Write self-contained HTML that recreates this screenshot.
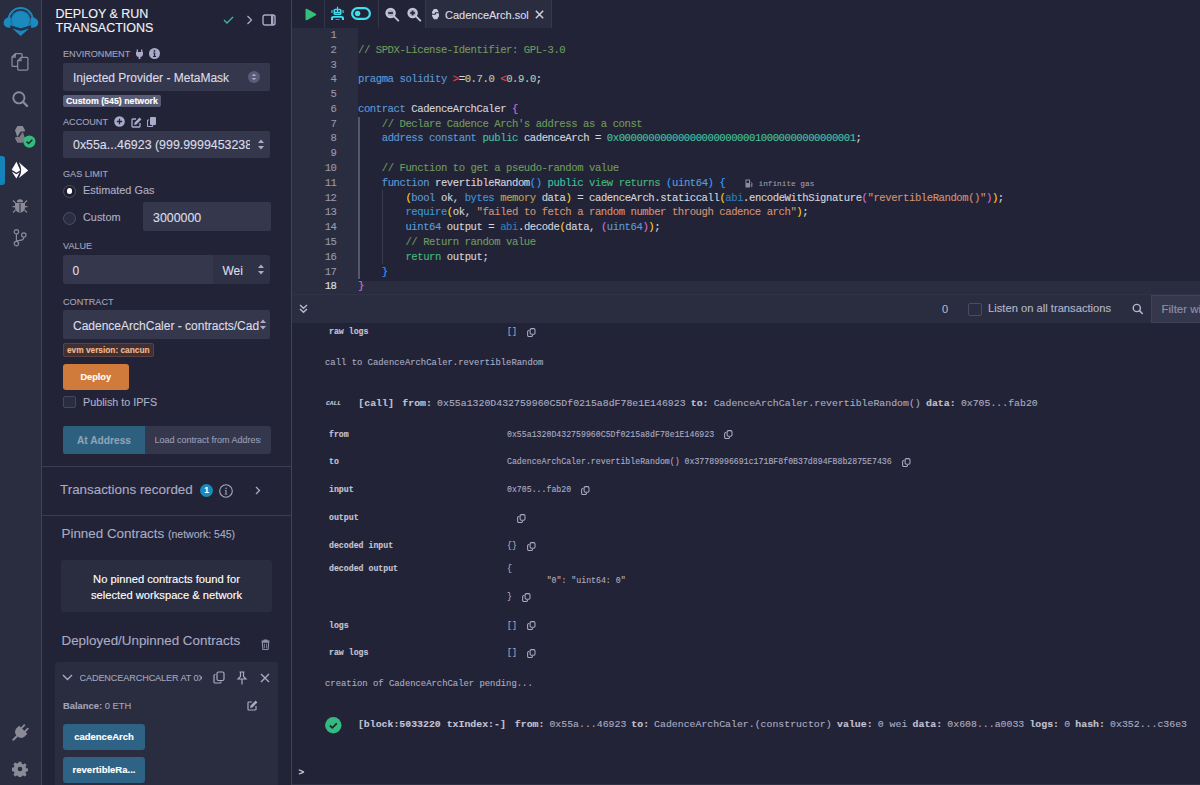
<!DOCTYPE html>
<html><head><meta charset="utf-8">
<style>
*{box-sizing:border-box;margin:0;padding:0}
html,body{width:1200px;height:785px;overflow:hidden;background:#222336;font-family:"Liberation Sans",sans-serif;color:#babbcc}
.a{position:absolute;white-space:nowrap}
#icons{position:absolute;left:0;top:0;width:42px;height:785px;background:#2a2c3f;border-right:1px solid #3f4155}
#side{position:absolute;left:42px;top:0;width:250px;height:785px;background:#222336;border-right:1px solid #3f4155}
#main{position:absolute;left:292px;top:0;width:908px;height:785px;background:#222336;overflow:hidden}
.lbl{font-size:9.1px;color:#a2a3bd}
.sel{position:absolute;background:#35384c;border-radius:2px}
.txt12{font-size:12px;color:#dcdce8}
.mono{font-family:"Liberation Mono",monospace}

#code .cm{color:#6f9a5c}
#code .kw{color:#5b9bd8}
#code .kw2{color:#3f95d8}
#code .tl{color:#43c1a0}
#code .gr{color:#45b87a}
#code .rd{color:#e8453c}
#code .nm{color:#b5cea8}
#code .b1{color:#ffd60a}
#code .b2{color:#d670d6}
#code .b3{color:#2f9fff}
#code .ol{color:#c0a24a}
#code .st{color:#d09274}
#code .ab{color:#2f7fbf}

#side .a, #main .a{-webkit-text-stroke:0.12px currentColor}
</style></head><body>
<div id="icons">
  <svg class="a" style="left:0;top:0" width="42" height="42" viewBox="0 0 42 42">
    <path d="M8.5 21.5 A12.2 12.2 0 0 1 32.9 21.5" transform="translate(0 -1.2)" fill="none" stroke="#1b8abf" stroke-width="2"/>
    <path d="M10.9 17.6 C6 17.4 3.7 19.5 3.7 22.7 C3.7 26 6 27.9 10.9 27.8z" fill="#1b8abf"/>
    <path d="M30.5 17.6 C35.5 17.4 38.2 19.5 38.2 22.7 C38.2 26 35.5 27.9 30.5 27.8z" fill="#1b8abf"/>
    <path d="M10.8 20.3 A9.9 9.9 0 0 1 30.6 20.3 L30.6 25.6 L20.7 28.6 L10.8 25.6z" fill="#1b8abf"/>
    <circle cx="20.7" cy="20.3" r="9.2" fill="none" stroke="#1c4a6c" stroke-width="0.9" stroke-dasharray="1 1.2"/>
    <path d="M10.3 25.4 L20.7 28.6 L31.1 25.4 L31.1 28.2 L20.7 31.2 L10.3 28.2z" fill="#1c3550"/>
    <path d="M12.3 28.6 L20.7 31.1 L29.1 28.6 L20.7 35.9z" fill="#1b8abf"/>
  </svg>
  <svg class="a" style="left:11px;top:53px" width="18" height="18" viewBox="0 0 18 18" fill="none" stroke="#8b8b98" stroke-width="1.25" stroke-linejoin="round">
    <path d="M4.3 0.7H10.1Q11.1 0.7 11.1 1.7V12.4Q11.1 13.4 10.1 13.4H2Q1 13.4 1 12.4V4z M4.3 0.7V4H1"/>
    <path d="M10 4.4H15.9Q16.9 4.4 16.9 5.4V16Q16.9 17 15.9 17H7.7Q6.7 17 6.7 16V7.7z" fill="#2a2c3f"/>
    <path d="M10 4.4V7.7H6.7"/>
  </svg>
  <svg class="a" style="left:11px;top:89px" width="18" height="18" viewBox="0 0 18 18" fill="none" stroke="#8b8b98">
    <circle cx="7.9" cy="8.8" r="5.6" stroke-width="1.9"/><path d="M11.9 12.8L16 16.9" stroke-width="2.2" stroke-linecap="round"/>
  </svg>
  <svg class="a" style="left:14.9px;top:125.7px" width="11" height="17" viewBox="0 0 11 17">
    <path d="M2.4 0H7.7L10.1 4.3L9.6 5.6H5.8L2.3 10.9L0 4.3z" fill="#8a8a94"/>
    <path d="M7.7 16.7H2.4L0 12.4L0.5 11.1H4.3L7.8 5.8L10.1 12.4z" fill="#7c7c86"/>
  </svg>
  <svg class="a" style="left:23.3px;top:135.3px" width="13" height="13" viewBox="0 0 13 13"><circle cx="6.4" cy="6.6" r="6.1" fill="#33bb7f"/><path d="M3.6 6.6L5.6 8.5L9.3 4.8" fill="none" stroke="#1c2a2a" stroke-width="1.5"/></svg>
  <div class="a" style="left:0;top:155.5px;width:5px;height:29px;background:#1583b8;border-radius:0 3px 3px 0"></div>
  <svg class="a" style="left:11px;top:161px" width="18" height="18" viewBox="0 0 18 18" fill="#fff">
    <path d="M5.4 0.7L0.75 8.75L5.4 11.7L9.3 9.3z"/>
    <path d="M0.75 10.4L5.4 13.3L8.7 11.3L5.4 17.5z"/>
    <path d="M7.9 1.2L17.2 9.5L7.9 17Q12.6 9.4 7.9 1.2z"/>
  </svg>
  <svg class="a" style="left:12px;top:198px" width="16" height="16" viewBox="0 0 16 16">
    <path d="M4.8 4.2 A3.2 3 0 0 1 11.2 4.2z" fill="#8b8b98"/>
    <path d="M3 5h10v4.5c0 2.9-2.2 5-5 5s-5-2.1-5-5z" fill="#8b8b98"/>
    <path d="M8 5.5v8.5" stroke="#2a2c3f" stroke-width="1.1"/>
    <path d="M1 2.5L3.5 5 M15 2.5L12.5 5 M0.5 8.6h2.5 M15.5 8.6H13 M1 14.5L3.5 12 M15 14.5L12.5 12" stroke="#8b8b98" stroke-width="1.1"/>
  </svg>
  <svg class="a" style="left:13px;top:229px" width="16" height="18" viewBox="0 0 16 18" fill="none" stroke="#8b8b98" stroke-width="1.2">
    <circle cx="3.4" cy="2.8" r="2.2"/><circle cx="3.4" cy="14.6" r="2.2"/><circle cx="10.8" cy="6" r="2.2"/>
    <path d="M3.4 5v7.4 M10.8 8.2c0 2.5-1.5 3-4 3.2c-1.8.2-3.1.6-3.4 1.2"/>
  </svg>
  <svg class="a" style="left:10px;top:722px" width="20" height="22" viewBox="-10 -11 20 22">
    <g transform="rotate(45)" fill="#8b8b98">
      <rect x="-3.4" y="-9.5" width="1.9" height="5.5" rx=".9"/><rect x="1.5" y="-9.5" width="1.9" height="5.5" rx=".9"/>
      <path d="M-5.8 -4.6H5.8V-0.8A5.8 5.2 0 0 1 -5.8 -0.8z"/>
      <rect x="-1" y="3.5" width="2" height="7" rx="1"/>
    </g>
  </svg>
  <svg class="a" style="left:12px;top:761px" width="16" height="16" viewBox="0 0 16 16">
    <path d="M6.7 0.8h2.6l.4 2 1.4.6 1.7-1.1 1.8 1.8-1.1 1.7.6 1.4 2 .4v2.6l-2 .4-.6 1.4 1.1 1.7-1.8 1.8-1.7-1.1-1.4.6-.4 2H6.7l-.4-2-1.4-.6-1.7 1.1-1.8-1.8 1.1-1.7-.6-1.4-2-.4V6.7l2-.4.6-1.4-1.1-1.7 1.8-1.8 1.7 1.1 1.4-.6z" fill="#8b8b98"/>
    <circle cx="8" cy="8" r="2.3" fill="#2a2c3f"/>
  </svg>
</div>
<div id="side">
  <div class="a" style="left:13.5px;top:7px;font-size:12.5px;line-height:14px;color:#f2f2f6">DEPLOY &amp; RUN<br>TRANSACTIONS</div>
  <svg class="a" style="left:181px;top:16px" width="11" height="8" viewBox="0 0 11 8"><path d="M1 4 L4 7 L10 1" fill="none" stroke="#3fb58f" stroke-width="1.4"/></svg>
  <svg class="a" style="left:204px;top:15px" width="7" height="10" viewBox="0 0 7 10"><path d="M1.5 1 L5.5 5 L1.5 9" fill="none" stroke="#a9abc4" stroke-width="1.3"/></svg>
  <svg class="a" style="left:220px;top:14px" width="14" height="12" viewBox="0 0 14 12"><rect x="1" y="1" width="12" height="10" rx="2" fill="none" stroke="#a9abc4" stroke-width="1.4"/><rect x="9" y="1" width="2.4" height="10" fill="#a9abc4"/></svg>

  <div class="a lbl" style="left:21px;top:49px">ENVIRONMENT</div>
  <svg class="a" style="left:94px;top:49px" width="7" height="10" viewBox="0 0 7 10"><path d="M1.3 0.5v2.5M5.7 0.5v2.5" stroke="#a9abc9" stroke-width="1.3"/><path d="M0 3h7v2.2c0 1.6-1.4 2.6-2.6 2.8v2h-1.8v-2C1.4 7.8 0 6.8 0 5.2z" fill="#a9abc9"/></svg>
  <svg class="a" style="left:107px;top:47.5px" width="11" height="11" viewBox="0 0 11 11"><circle cx="5.5" cy="5.5" r="5.5" fill="#a9abc9"/><circle cx="5.5" cy="2.9" r="0.9" fill="#222336"/><path d="M4.3 4.6h1.9v3.4h0.9v1H4v-1h0.9V5.6h-0.6z" fill="#222336"/></svg>
  <div class="sel" style="left:21px;top:63px;width:207px;height:28px"></div>
  <div class="a txt12" style="left:31px;top:70.7px">Injected Provider - MetaMask</div>
  <svg class="a" style="left:206px;top:71px" width="12" height="12" viewBox="0 0 12 12"><circle cx="6" cy="6" r="6" fill="#595c76"/><path d="M3.8 5L6 2.8L8.2 5zM3.8 7L6 9.2L8.2 7z" fill="#a9abc9"/></svg>
  <div class="a badge" style="left:21px;top:95px;width:98px;height:12px;background:#595c76;color:#fff;font-weight:bold;font-size:8.8px;line-height:12.5px;padding-left:3px;border-radius:2px">Custom (545) network</div>

  <div class="a lbl" style="left:21px;top:117px">ACCOUNT</div>
  <svg class="a" style="left:72px;top:116px" width="11" height="11" viewBox="0 0 11 11"><circle cx="5.5" cy="5.5" r="5.3" fill="#a9abc9"/><path d="M5.5 2.8v5.4M2.8 5.5h5.4" stroke="#222336" stroke-width="1.3"/></svg>
  <svg class="a" style="left:88.5px;top:116.5px" width="11" height="11" viewBox="0 0 11 11"><path d="M5 2H1.8C1.3 2 1 2.3 1 2.8v6.4c0 .5.3.8.8.8h6.4c.5 0 .8-.3.8-.8V6" fill="none" stroke="#a9abc9" stroke-width="1.3"/><path d="M8.6 0.6l1.8 1.8-5 5-2.3.5.5-2.3z" fill="#a9abc9"/></svg>
  <svg class="a" style="left:105px;top:117px" width="9" height="10" viewBox="0 0 9 10"><path d="M2 3H1.2C.7 3 .5 3.3.5 3.8v5c0 .5.3.7.7.7H5c.5 0 .7-.3.7-.7V8" fill="none" stroke="#a9abc9" stroke-width="1.1"/><rect x="3" y="0" width="6" height="8" rx="1" fill="#a9abc9"/></svg>
  <div class="sel" style="left:21px;top:131px;width:207px;height:27px"></div>
  <div class="a txt12" style="left:31px;top:138px;width:177px;overflow:hidden;font-size:12.4px">0x55a...46923 (999.999945323858</div>
  <svg class="a" style="left:214.5px;top:138px" width="8" height="13" viewBox="0 0 8 13"><path d="M1 5L4 1.5L7 5zM1 8L4 11.5L7 8z" fill="#a9abc9"/></svg>

  <div class="a lbl" style="left:21px;top:169px">GAS LIMIT</div>
  <div class="a" style="left:21px;top:184.5px;width:13px;height:13px;border-radius:50%;background:#1e1f30;border:1.4px solid #4d4f64"></div>
  <div class="a" style="left:24.6px;top:188.1px;width:5.8px;height:5.8px;border-radius:50%;background:#fff"></div>
  <div class="a" style="left:41px;top:184px;font-size:10.9px;color:#aeafc4">Estimated Gas</div>
  <div class="a" style="left:21px;top:211.5px;width:13px;height:13px;border-radius:50%;background:#2b2d41;border:1.4px solid #4d4f64"></div>
  <div class="a" style="left:41px;top:211px;font-size:10.9px;color:#aeafc4">Custom</div>
  <div class="sel" style="left:101px;top:202px;width:128px;height:29px"></div>
  <div class="a txt12" style="left:111px;top:210.5px;font-size:12.4px">3000000</div>

  <div class="a lbl" style="left:21px;top:241px">VALUE</div>
  <div class="sel" style="left:21px;top:255px;width:150px;height:29px;border-radius:3px 0 0 3px"></div>
  <div class="sel" style="left:171px;top:255px;width:57px;height:29px;background:#2f3145;border-radius:0 3px 3px 0"></div>
  <div class="a txt12" style="left:30.5px;top:263.7px">0</div>
  <div class="a txt12" style="left:180.5px;top:263.7px">Wei</div>
  <svg class="a" style="left:214.5px;top:263px" width="8" height="13" viewBox="0 0 8 13"><path d="M1 5L4 1.5L7 5zM1 8L4 11.5L7 8z" fill="#a9abc9"/></svg>

  <div class="a lbl" style="left:21px;top:297px">CONTRACT</div>
  <div class="sel" style="left:21px;top:310px;width:207px;height:29px"></div>
  <div class="a txt12" style="left:31px;top:318.7px;width:186px;overflow:hidden">CadenceArchCaler - contracts/CadenceArch.sol</div>
  <svg class="a" style="left:217px;top:318px" width="8" height="13" viewBox="0 0 8 13"><path d="M1 5L4 1.5L7 5zM1 8L4 11.5L7 8z" fill="#a9abc9"/></svg>
  <div class="a" style="left:21px;top:343px;width:91px;height:14px;background:#3f3034;border:1px solid #5a4242;color:#f3b88c;font-weight:bold;font-size:8.3px;line-height:12.5px;padding-left:3px;border-radius:2px">evm version: cancun</div>

  <div class="a" style="left:21px;top:364px;width:65.5px;height:26px;background:#d07a3b;border-radius:3px;color:#fff;font-weight:bold;font-size:9.2px;line-height:26px;text-align:center">Deploy</div>
  <div class="a" style="left:21px;top:395.5px;width:13px;height:12.5px;border:1px solid #44475e;border-radius:2px;background:#2a2c3f"></div>
  <div class="a" style="left:41px;top:395.5px;font-size:10.75px;color:#aeafc4">Publish to IPFS</div>

  <div class="a" style="left:21px;top:426px;width:82px;height:28px;background:#2d5f7f;border-radius:2px 0 0 2px;color:#8ea3b6;font-weight:bold;font-size:10.2px;line-height:29.5px;text-align:center">At Address</div>
  <div class="a" style="left:103px;top:426px;width:126px;height:28px;background:#35384c;border-radius:0 3px 3px 0;color:#9a9cb4;font-size:9px;line-height:28px;padding-left:9.5px;overflow:hidden"><div style="width:106px;overflow:hidden">Load contract from Address</div></div>
  <div class="a" style="left:0;top:466px;width:249px;height:1px;background:#3b3d52"></div>

  <div class="a" style="left:18px;top:481.5px;font-size:13.4px;color:#a9abc4">Transactions recorded</div>
  <div class="a" style="left:158px;top:484px;width:13px;height:13px;border-radius:50%;background:#1b89bd;color:#fff;font-weight:bold;font-size:8.5px;line-height:13px;text-align:center">1</div>
  <svg class="a" style="left:177px;top:483.5px" width="14" height="14" viewBox="0 0 14 14"><circle cx="7" cy="7" r="6.3" fill="none" stroke="#a9abc4" stroke-width="1.1"/><circle cx="7" cy="4.2" r="0.8" fill="#a9abc4"/><path d="M5.8 6h1.7v3.8h0.8v0.8H5.7v-.8h.8V6.8h-.7z" fill="#a9abc4"/></svg>
  <svg class="a" style="left:213px;top:486px" width="6" height="9" viewBox="0 0 6 9"><path d="M1 1L4.5 4.5L1 8" fill="none" stroke="#a9abc4" stroke-width="1.3"/></svg>
  <div class="a" style="left:0;top:515px;width:249px;height:1px;background:#3b3d52"></div>

  <div class="a" style="left:19.5px;top:525.5px;font-size:13.4px;color:#a9abc4">Pinned Contracts <span style="font-size:10.5px">(network: 545)</span></div>
  <div class="a" style="left:19px;top:560px;width:211px;height:52px;background:#2a2c3f;border-radius:3px"></div>
  <div class="a" style="left:19px;top:572px;width:211px;text-align:center;font-size:11.2px;line-height:15.5px;color:#fff;white-space:normal">No pinned contracts found for<br>selected workspace &amp; network</div>

  <div class="a" style="left:19.5px;top:632.5px;font-size:13.4px;color:#a9abc4">Deployed/Unpinned Contracts</div>
  <svg class="a" style="left:218.5px;top:638.5px" width="9" height="11" viewBox="0 0 9 11"><path d="M2.8 0.6h3.4l.5 1H8.4v1.3H.6V1.6h1.7z" fill="#8e90a8"/><path d="M1.3 3.3h6.4l-.5 6.6c0 .4-.3.6-.7.6H2.5c-.4 0-.7-.2-.7-.6z" fill="none" stroke="#8e90a8" stroke-width="1.1"/><path d="M3.4 4.6v4.6M5.6 4.6v4.6" stroke="#8e90a8" stroke-width="0.8"/></svg>

  <div class="a" style="left:12.5px;top:662px;width:223.5px;height:130px;background:#2a2c3f;border-radius:3px"></div>
  <svg class="a" style="left:20px;top:674px" width="11" height="7" viewBox="0 0 11 7"><path d="M1 1L5.5 5.5L10 1" fill="none" stroke="#a9abc4" stroke-width="1.4"/></svg>
  <div class="a" style="left:37.5px;top:672.5px;width:122px;overflow:hidden;font-size:9.1px;letter-spacing:-0.1px;color:#a2a4bc">CADENCEARCHCALER AT 0X55A</div>
  <svg class="a" style="left:171.3px;top:671.3px" width="12" height="13" viewBox="0 0 12 13"><rect x="4" y="1" width="7" height="8.5" rx="1.5" fill="none" stroke="#a9abc4" stroke-width="1.2"/><path d="M2.5 3.5H2C1.4 3.5 1 3.9 1 4.5v6.5c0 .6.4 1 1 1h5c.6 0 1-.4 1-1v-.5" fill="none" stroke="#a9abc4" stroke-width="1.2"/></svg>
  <svg class="a" style="left:194.3px;top:671px" width="12" height="14" viewBox="0 0 12 14"><path d="M3.5 1h5M4.5 1v4.5L2 8h8L7.5 5.5V1M6 8v5.5" fill="none" stroke="#a9abc4" stroke-width="1.2"/></svg>
  <svg class="a" style="left:217.5px;top:673px" width="10" height="10" viewBox="0 0 10 10"><path d="M1 1L9 9M9 1L1 9" stroke="#a9abc4" stroke-width="1.4"/></svg>
  <div class="a" style="left:21px;top:699.5px;font-size:9.4px;color:#a2a4bc"><b>Balance:</b> 0 ETH</div>
  <svg class="a" style="left:205px;top:700px" width="11" height="11" viewBox="0 0 11 11"><path d="M5 2H1.8C1.3 2 1 2.3 1 2.8v6.4c0 .5.3.8.8.8h6.4c.5 0 .8-.3.8-.8V6" fill="none" stroke="#a9abc4" stroke-width="1.2"/><path d="M8.6 0.6l1.8 1.8-5 5-2.3.5.5-2.3z" fill="#a9abc4"/></svg>
  <div class="a" style="left:21px;top:724px;width:82px;height:26px;background:#2f6385;border-radius:3px;color:#fff;font-weight:bold;font-size:9.5px;line-height:26px;text-align:center">cadenceArch</div>
  <div class="a" style="left:21px;top:757px;width:82px;height:26px;background:#2f6385;border-radius:3px;color:#fff;font-weight:bold;font-size:9.5px;line-height:26px;text-align:center">revertibleRa...</div>
</div>
<div id="main">
  <!-- top bar (coords relative to main: x-292) -->
  <svg class="a" style="left:13px;top:7.5px" width="12" height="13" viewBox="0 0 12 13"><path d="M1.8 0.8C1.2 0.4 0.5 0.8 0.5 1.5v10c0 .7.7 1.1 1.3.7l9-5c.6-.4.6-1.1 0-1.4z" fill="#32c07a"/></svg>
  <div class="a" style="left:31.5px;top:0;width:1px;height:28px;background:#33354a"></div>
  <svg class="a" style="left:38.5px;top:6px" width="13" height="15" viewBox="0 0 13 15" fill="#3de0ee">
    <rect x="5.9" y="0.7" width="1.2" height="2.3"/>
    <rect x="2.5" y="2.7" width="8" height="6.3" rx="1.6"/>
    <rect x="0" y="4" width="1.8" height="3" rx=".6" opacity=".6"/><rect x="11.2" y="4" width="1.8" height="3" rx=".6" opacity=".6"/>
    <circle cx="5" cy="5" r="0.9" fill="#1c2033"/><circle cx="8" cy="5" r="0.9" fill="#1c2033"/>
    <rect x="4.3" y="7" width="4.4" height="0.8" fill="#1c6a80"/>
    <path d="M0 14V12.3C0 10.8 1 10 2.4 10h8.2c1.4 0 2.4.8 2.4 2.3V14h-2.1v-1.6c0-.4-.2-.6-.6-.6H2.7c-.4 0-.6.2-.6.6V14z"/>
    <rect x="4.5" y="13" width="4" height="1" fill="#8aa8c0" opacity=".7"/>
  </svg>
  <svg class="a" style="left:58.5px;top:7px" width="20" height="13" viewBox="0 0 20 13"><rect x="1.1" y="1.1" width="17.8" height="10.8" rx="5.4" fill="none" stroke="#3de0ee" stroke-width="2.2"/><circle cx="6.6" cy="6.5" r="2.7" fill="#3de0ee"/></svg>
  <div class="a" style="left:85.5px;top:0;width:1px;height:28px;background:#33354a"></div>
  <svg class="a" style="left:93px;top:6.5px" width="15" height="15" viewBox="0 0 15 15"><circle cx="5.6" cy="6" r="5.2" fill="#c6c6d8"/><circle cx="5.6" cy="6" r="3.3" fill="#a9aac0"/><rect x="3.3" y="5.1" width="4.6" height="1.8" fill="#262838"/><path d="M9.3 9.6L13.3 13.6" stroke="#c6c6d8" stroke-width="1.9" stroke-linecap="round"/></svg>
  <svg class="a" style="left:114.5px;top:6.5px" width="15" height="15" viewBox="0 0 15 15"><circle cx="5.6" cy="6" r="5.2" fill="#c6c6d8"/><circle cx="5.6" cy="6" r="3.3" fill="#a9aac0"/><rect x="3.3" y="5.1" width="4.6" height="1.8" fill="#262838"/><rect x="4.7" y="3.7" width="1.8" height="4.6" fill="#262838"/><path d="M9.3 9.6L13.3 13.6" stroke="#c6c6d8" stroke-width="1.9" stroke-linecap="round"/></svg>
  <div class="a" style="left:132.5px;top:0;width:127.5px;height:28px;background:#2a2c3f;border-left:1px solid #36384c;border-right:1px solid #36384c"></div>
  <svg class="a" style="left:140px;top:9.3px" width="7" height="11" viewBox="0 0 7 11" fill="#c8c8dc"><path d="M1.8 0H5L6.8 3.3H3.3L2.6 4.8H0.2L0 3.8V2.9z"/><path d="M0 5.7H3.5L4.2 4.2H6.8L7 5.3V7.2L5.2 10.2H1.8L0 7z"/></svg>
  <div class="a" style="left:153px;top:8.5px;font-size:11px;color:#dcdce8">CadenceArch.sol</div>
  <svg class="a" style="left:242.6px;top:9.9px" width="9" height="9" viewBox="0 0 9 9"><path d="M0.8 0.8L8.2 8.2M8.2 0.8L0.8 8.2" stroke="#d0d0dc" stroke-width="1.5"/></svg>

  <!-- editor -->
  <div class="a" style="left:0;top:28px;width:66px;height:266px;background:#2a2c3f"></div>
  <div class="a" style="left:66px;top:280.5px;width:842px;height:13px;background:#2a2c3f"></div>
  <div class="a" style="left:66.3px;top:117px;width:1.3px;height:162px;background:#55576b"></div>
  <div class="a" style="left:90px;top:190px;width:1px;height:74px;background:#393b4f"></div>
  <div class="a mono" id="gut" style="left:0;top:28px;width:44.5px;text-align:right;font-size:10.6px;letter-spacing:-0.435px;line-height:14.78px;color:#9a9aaa">1<br>2<br>3<br>4<br>5<br>6<br>7<br>8<br>9<br>10<br>11<br>12<br>13<br>14<br>15<br>16<br>17<br><span style="color:#e0e0ea">18</span></div>
  <pre class="a mono" id="code" style="white-space:pre;left:66px;top:28px;font-size:10.6px;letter-spacing:-0.435px;line-height:14.78px;color:#d4d4dc">

<span class="cm">// SPDX-License-Identifier: GPL-3.0</span>

<span class="kw">pragma</span> <span class="kw">solidity</span> <span class="rd">&gt;</span>=<span class="nm">0.7.0</span> <span class="rd">&lt;</span><span class="nm">0.9.0</span>;

<span class="kw">contract</span> CadenceArchCaler <span class="b2">{</span>
    <span class="cm">// Declare Cadence Arch's address as a const</span>
    <span class="kw">address</span> <span class="kw">constant</span> <span class="tl">public</span> cadenceArch = <span class="tl">0x0000000000000000000000010000000000000001</span>;

    <span class="cm">// Function to get a pseudo-random value</span>
    <span class="kw">function</span> revertibleRandom<span class="b3">()</span> <span class="tl">public</span> <span class="gr">view</span> <span class="gr">returns</span> <span class="b3">(</span><span class="kw">uint64</span><span class="b3">)</span> <span class="b3">{</span>
        <span class="b1">(</span><span class="kw">bool</span> ok, <span class="kw2">bytes</span> <span class="ol">memory</span> data<span class="b1">)</span> = cadenceArch.staticcall<span class="b1">(</span><span class="ab">abi</span>.encodeWithSignature<span class="b2">(</span><span class="st">"revertibleRandom()"</span><span class="b2">)</span><span class="b1">)</span>;
        <span class="kw2">require</span><span class="b1">(</span>ok, <span class="st">"failed to fetch a random number through cadence arch"</span><span class="b1">)</span>;
        <span class="kw">uint64</span> output = <span class="ab">abi</span>.decode<span class="b1">(</span>data, <span class="b2">(</span><span class="kw">uint64</span><span class="b2">)</span><span class="b1">)</span>;
        <span class="cm">// Return random value</span>
        <span class="gr">return</span> output;
    <span class="b3">}</span>
<span class="b2">}</span></pre>
  <svg class="a" style="left:453px;top:178.5px" width="8" height="9" viewBox="0 0 8 9" fill="#8a8c9e"><path d="M0.5 0.5h4.5v8H0.5z M1.5 1.5v2.5h2.5V1.5z" fill-rule="evenodd"/><path d="M5.5 3l1.5 1v3.5c0 .5-.8.5-.8 0V5" fill="none" stroke="#8a8c9e" stroke-width="0.8"/></svg>
  <div class="a mono" style="left:466.5px;top:179.5px;font-size:7.75px;color:#9a9cb0">infinite gas</div>

  <!-- terminal bar -->
  <div class="a" style="left:0;top:293.5px;width:908px;height:29px;background:#2a2c3f;border-top:1px solid #303246"></div>
  <svg class="a" style="left:6.5px;top:304px" width="9" height="10" viewBox="0 0 9 10" fill="none" stroke="#b4b6cc" stroke-width="1.5"><path d="M1 1L4.5 4.3L8 1M1 5L4.5 8.3L8 5"/></svg>
  <div class="a" style="left:650px;top:303px;font-size:11px;color:#b4b6cc">0</div>
  <div class="a" style="left:676px;top:302.5px;width:14px;height:13.5px;border:1px solid #4a4c62;border-radius:2px;background:#2a2c3f"></div>
  <div class="a" style="left:696px;top:302.3px;font-size:11.2px;color:#b4b6cc">Listen on all transactions</div>
  <svg class="a" style="left:840px;top:302.5px" width="12" height="12" viewBox="0 0 12 12"><circle cx="4.8" cy="5" r="3.6" fill="none" stroke="#b4b6cc" stroke-width="1.4"/><path d="M7.4 7.6L10.3 10.5" stroke="#b4b6cc" stroke-width="1.6" stroke-linecap="round"/></svg>
  <div class="a" style="left:859px;top:295px;width:60px;height:27.7px;background:#35384c;border:1px solid #404258;border-right:none;border-radius:1px 0 0 1px"></div>
  <div class="a" style="left:869.5px;top:302.5px;font-size:11.5px;color:#8e90a8">Filter with transaction</div>

  <!-- terminal body -->
  <div id="botline" class="a" style="left:0;top:784px;width:908px;height:1px;background:#2f3145;z-index:2"></div>
  <div id="term" class="a mono" style="left:0;top:322.5px;width:908px;height:463px;color:#a9abc2">
<!--TERM-->
<div class="a mono" style="left:37.00px;top:3.50px;font-size:8.23px;line-height:12px;color:#c4c5d6;"><b>raw logs</b></div>
<div class="a mono" style="left:215.00px;top:3.50px;font-size:8.23px;line-height:12px;color:#a9abc2;">[]</div>
<svg class="a" style="left:234.50px;top:5.00px" width="9" height="9" viewBox="0 0 9 9" fill="none" stroke="#a9abc2" stroke-width="1.05"><rect x="3.1" y="0.6" width="4.9" height="5.6" rx="1.3"/><path d="M2.3 2.4H1.9C1.1 2.4.6 2.9.6 3.7v3.5c0 .8.5 1.3 1.3 1.3h2.3c.8 0 1.3-.5 1.3-1.3V7"/></svg>
<div class="a mono" style="left:33.00px;top:34.00px;font-size:8.89px;line-height:12px;color:#a9abc2;">call to CadenceArchCaler.revertibleRandom</div>
<div class="a " style="left:34.00px;top:75.00px;font-size:6.2px;line-height:12px;color:#c4c5d6;"><i><b>CALL</b></i></div>
<div class="a mono" style="left:66.30px;top:75.50px;font-size:9.87px;line-height:12px;color:#a9abc2;"><span style=""><b style="color:#c2c3d4">[call]</b></span><span style="margin-left:8.5px;"><b style="color:#c2c3d4">from:</b></span><span style="margin-left:5.2px;">0x55a1320D432759960C5Df0215a8dF78e1E146923</span><span style="margin-left:5.2px;"><b style="color:#c2c3d4">to:</b></span><span style="margin-left:5.2px;">CadenceArchCaler.revertibleRandom()</span><span style="margin-left:5.2px;"><b style="color:#c2c3d4">data:</b></span><span style="margin-left:5.3px;">0x705...fab20</span></div>
<div class="a mono" style="left:37.00px;top:106.10px;font-size:8.23px;line-height:12px;color:#c4c5d6;"><b>from</b></div>
<div class="a mono" style="left:215.00px;top:106.10px;font-size:8.23px;line-height:12px;color:#a9abc2;">0x55a1320D432759960C5Df0215a8dF78e1E146923</div>
<svg class="a" style="left:431.50px;top:107.60px" width="9" height="9" viewBox="0 0 9 9" fill="none" stroke="#a9abc2" stroke-width="1.05"><rect x="3.1" y="0.6" width="4.9" height="5.6" rx="1.3"/><path d="M2.3 2.4H1.9C1.1 2.4.6 2.9.6 3.7v3.5c0 .8.5 1.3 1.3 1.3h2.3c.8 0 1.3-.5 1.3-1.3V7"/></svg>
<div class="a mono" style="left:37.00px;top:133.50px;font-size:8.23px;line-height:12px;color:#c4c5d6;"><b>to</b></div>
<div class="a mono" style="left:215.00px;top:133.50px;font-size:8.23px;line-height:12px;color:#a9abc2;">CadenceArchCaler.revertibleRandom() 0x37789996691c171BF8f0B37d894FB8b2875E7436</div>
<svg class="a" style="left:610.00px;top:135.00px" width="9" height="9" viewBox="0 0 9 9" fill="none" stroke="#a9abc2" stroke-width="1.05"><rect x="3.1" y="0.6" width="4.9" height="5.6" rx="1.3"/><path d="M2.3 2.4H1.9C1.1 2.4.6 2.9.6 3.7v3.5c0 .8.5 1.3 1.3 1.3h2.3c.8 0 1.3-.5 1.3-1.3V7"/></svg>
<div class="a mono" style="left:37.00px;top:161.50px;font-size:8.23px;line-height:12px;color:#c4c5d6;"><b>input</b></div>
<div class="a mono" style="left:215.00px;top:161.50px;font-size:8.23px;line-height:12px;color:#a9abc2;">0x705...fab20</div>
<svg class="a" style="left:288.50px;top:163.00px" width="9" height="9" viewBox="0 0 9 9" fill="none" stroke="#a9abc2" stroke-width="1.05"><rect x="3.1" y="0.6" width="4.9" height="5.6" rx="1.3"/><path d="M2.3 2.4H1.9C1.1 2.4.6 2.9.6 3.7v3.5c0 .8.5 1.3 1.3 1.3h2.3c.8 0 1.3-.5 1.3-1.3V7"/></svg>
<div class="a mono" style="left:37.00px;top:189.50px;font-size:8.23px;line-height:12px;color:#c4c5d6;"><b>output</b></div>
<svg class="a" style="left:224.50px;top:191.00px" width="9" height="9" viewBox="0 0 9 9" fill="none" stroke="#a9abc2" stroke-width="1.05"><rect x="3.1" y="0.6" width="4.9" height="5.6" rx="1.3"/><path d="M2.3 2.4H1.9C1.1 2.4.6 2.9.6 3.7v3.5c0 .8.5 1.3 1.3 1.3h2.3c.8 0 1.3-.5 1.3-1.3V7"/></svg>
<div class="a mono" style="left:37.00px;top:217.50px;font-size:8.23px;line-height:12px;color:#c4c5d6;"><b>decoded input</b></div>
<div class="a mono" style="left:215.00px;top:217.50px;font-size:8.23px;line-height:12px;color:#a9abc2;">{}</div>
<svg class="a" style="left:234.50px;top:219.00px" width="9" height="9" viewBox="0 0 9 9" fill="none" stroke="#a9abc2" stroke-width="1.05"><rect x="3.1" y="0.6" width="4.9" height="5.6" rx="1.3"/><path d="M2.3 2.4H1.9C1.1 2.4.6 2.9.6 3.7v3.5c0 .8.5 1.3 1.3 1.3h2.3c.8 0 1.3-.5 1.3-1.3V7"/></svg>
<div class="a mono" style="left:37.00px;top:240.50px;font-size:8.23px;line-height:12px;color:#c4c5d6;"><b>decoded output</b></div>
<div class="a mono" style="left:215.00px;top:240.50px;font-size:8.23px;line-height:12px;color:#a9abc2;">{</div>
<div class="a mono" style="left:254.70px;top:252.80px;font-size:8.23px;line-height:12px;color:#a9abc2;">"0": "uint64: 0"</div>
<div class="a mono" style="left:215.00px;top:268.80px;font-size:8.23px;line-height:12px;color:#a9abc2;">}</div>
<svg class="a" style="left:229.50px;top:270.00px" width="9" height="9" viewBox="0 0 9 9" fill="none" stroke="#a9abc2" stroke-width="1.05"><rect x="3.1" y="0.6" width="4.9" height="5.6" rx="1.3"/><path d="M2.3 2.4H1.9C1.1 2.4.6 2.9.6 3.7v3.5c0 .8.5 1.3 1.3 1.3h2.3c.8 0 1.3-.5 1.3-1.3V7"/></svg>
<div class="a mono" style="left:37.00px;top:297.00px;font-size:8.23px;line-height:12px;color:#c4c5d6;"><b>logs</b></div>
<div class="a mono" style="left:215.00px;top:297.00px;font-size:8.23px;line-height:12px;color:#a9abc2;">[]</div>
<svg class="a" style="left:234.50px;top:298.50px" width="9" height="9" viewBox="0 0 9 9" fill="none" stroke="#a9abc2" stroke-width="1.05"><rect x="3.1" y="0.6" width="4.9" height="5.6" rx="1.3"/><path d="M2.3 2.4H1.9C1.1 2.4.6 2.9.6 3.7v3.5c0 .8.5 1.3 1.3 1.3h2.3c.8 0 1.3-.5 1.3-1.3V7"/></svg>
<div class="a mono" style="left:37.00px;top:324.50px;font-size:8.23px;line-height:12px;color:#c4c5d6;"><b>raw logs</b></div>
<div class="a mono" style="left:215.00px;top:324.50px;font-size:8.23px;line-height:12px;color:#a9abc2;">[]</div>
<svg class="a" style="left:234.50px;top:326.00px" width="9" height="9" viewBox="0 0 9 9" fill="none" stroke="#a9abc2" stroke-width="1.05"><rect x="3.1" y="0.6" width="4.9" height="5.6" rx="1.3"/><path d="M2.3 2.4H1.9C1.1 2.4.6 2.9.6 3.7v3.5c0 .8.5 1.3 1.3 1.3h2.3c.8 0 1.3-.5 1.3-1.3V7"/></svg>
<div class="a mono" style="left:33.00px;top:355.50px;font-size:8.89px;line-height:12px;color:#a9abc2;">creation of CadenceArchCaler pending...</div>
<svg class="a" style="left:32.70px;top:394.50px" width="17" height="17" viewBox="0 0 17 17"><circle cx="8.3" cy="8.3" r="8.2" fill="#34ba7e"/><path d="M4.8 8.5L7.3 10.8L11.8 6.3" fill="none" stroke="#1d2630" stroke-width="1.7"/></svg>
<div class="a mono" style="left:65.90px;top:396.50px;font-size:9.87px;line-height:12px;color:#a9abc2;"><span style=""><b style="color:#c2c3d4">[block:5033220 txIndex:-]</b></span><span style="margin-left:9px;"><b style="color:#c2c3d4">from:</b></span><span style="margin-left:5px;">0x55a...46923</span><span style="margin-left:5px;"><b style="color:#c2c3d4">to:</b></span><span style="margin-left:5px;">CadenceArchCaler.(constructor)</span><span style="margin-left:5.5px;"><b style="color:#c2c3d4">value:</b></span><span style="margin-left:5.2px;">0 wei</span><span style="margin-left:5.2px;"><b style="color:#c2c3d4">data:</b></span><span style="margin-left:5.2px;">0x608...a0033</span><span style="margin-left:5.2px;"><b style="color:#c2c3d4">logs:</b></span><span style="margin-left:5.2px;">0</span><span style="margin-left:5.2px;"><b style="color:#c2c3d4">hash:</b></span><span style="margin-left:5.2px;">0x352...c36e3</span></div>
<div class="a mono" style="left:6.50px;top:444.50px;font-size:9.5px;line-height:12px;color:#d0d0dc;"><b>&gt;</b></div>
<!--/TERM-->
</div>
</div>
</body></html>
